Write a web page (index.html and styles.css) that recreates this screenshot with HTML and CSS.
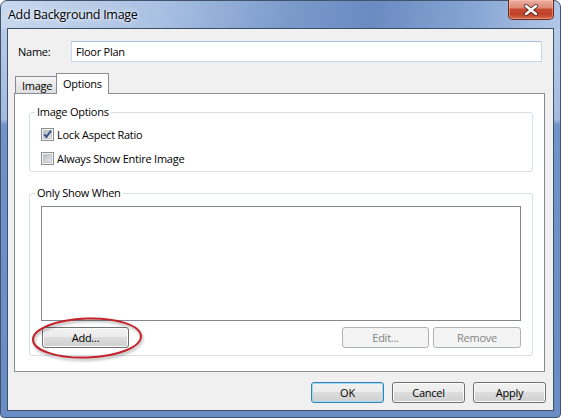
FILE: index.html
```html
<!DOCTYPE html>
<html>
<head>
<meta charset="utf-8">
<link rel="stylesheet" href="styles.css">
</head>
<body>
<div class="window">
  <div class="titlebar">
    <span class="title">Add Background Image</span>
    <div class="close">
      <svg width="16" height="12" viewBox="0 0 16 12">
        <path d="M3 2 L13 10 M13 2 L3 10" stroke="#3a1c18" stroke-width="4.2" stroke-linecap="round" fill="none" opacity="0.75"/>
        <path d="M3 2 L13 10 M13 2 L3 10" stroke="#ffffff" stroke-width="2.4" stroke-linecap="round" fill="none"/>
      </svg>
    </div>
  </div>
  <div class="client">
    <div class="name-row">
      <span class="label">Name:</span>
      <div class="textbox">Floor Plan</div>
    </div>
    <div class="tabs">
      <div class="tab">Image</div>
      <div class="tab active">Options</div>
    </div>
    <div class="panel">
      <div class="group g1">
        <span class="legend">Image Options</span>
        <div class="check">
          <svg class="box" width="13" height="13" viewBox="0 0 13 13">
            <defs><linearGradient id="cb1" x1="0" y1="0" x2="1" y2="1"><stop offset="0" stop-color="#b4b9c0"/><stop offset="1" stop-color="#ececec"/></linearGradient></defs>
            <rect x="0.5" y="0.5" width="12" height="12" fill="#f4f4f4" stroke="#8e8f8f"/>
            <rect x="2.5" y="2.5" width="8" height="8" fill="url(#cb1)" stroke="#c3c6cb"/>
            <path d="M3.2 6.4 L5.4 8.9 L10 2.6" fill="none" stroke="#3d5183" stroke-width="1.9"/>
          </svg>
          <span>Lock Aspect Ratio</span>
        </div>
        <div class="check">
          <svg class="box" width="13" height="13" viewBox="0 0 13 13">
            <defs><linearGradient id="cb2" x1="0" y1="0" x2="1" y2="1"><stop offset="0" stop-color="#b4b9c0"/><stop offset="1" stop-color="#ececec"/></linearGradient></defs>
            <rect x="0.5" y="0.5" width="12" height="12" fill="#f4f4f4" stroke="#8e8f8f"/>
            <rect x="2.5" y="2.5" width="8" height="8" fill="url(#cb2)" stroke="#c3c6cb"/>
          </svg>
          <span>Always Show Entire Image</span>
        </div>
      </div>
      <div class="group g2">
        <span class="legend">Only Show When</span>
        <div class="listbox"></div>
        <div class="btn-row">
          <div class="btn add">Add...</div>
          <div class="btn disabled edit">Edit...</div>
          <div class="btn disabled remove">Remove</div>
        </div>
        <svg class="ellipse" width="118" height="48" viewBox="0 0 118 48">
          <ellipse cx="57" cy="23" rx="54" ry="19.5" fill="none" stroke="#c4222b" stroke-width="2" transform="rotate(-2 57 23)"/>
        </svg>
      </div>
    </div>
    <div class="footer">
      <div class="btn default">OK</div>
      <div class="btn">Cancel</div>
      <div class="btn">Apply</div>
    </div>
  </div>
</div>
</body>
</html>
```
FILE: styles.css
```css
* { box-sizing: border-box; }
html, body { margin: 0; background: #ffffff; }
body {
  font-family: "Segoe UI", "Open Sans", sans-serif;
  font-size: 11px;
  letter-spacing: -0.25px;
  color: #000;
}
.window {
  width: 561px;
  height: 418px;
  border: 1px solid #42546c;
  border-radius: 7px 7px 4px 4px;
  padding: 0 6px 6px;
  display: flex;
  flex-direction: column;
  background:
    linear-gradient(100deg, #c8d8ee 0%, #aac1e3 28%, #7a9acb 52%, #6a8bc1 66%, #86a5d4 84%, #b2c7e6 100%) top left / 100% 28px no-repeat,
    linear-gradient(to bottom, #b8cbe8 28px, #a4bbdf 118px, #7193c8 124px, #6a8cc4 100%);
}
.titlebar {
  height: 27px;
  display: flex;
  justify-content: space-between;
  align-items: flex-start;
}
.title {
  font-size: 12.5px;
  letter-spacing: -0.3px;
  padding: 6px 0 0 1px;
  line-height: 16px;
  text-shadow: 0 0 6px rgba(255,255,255,0.9), 0 0 3px rgba(255,255,255,0.7);
}
.close {
  width: 46px;
  height: 20px;
  margin-top: -1px;
  border: 1px solid #6b2a22;
  border-top: none;
  border-radius: 0 0 5px 5px;
  background: linear-gradient(#eab0a2 0%, #de8a75 40%, #c64a31 50%, #c0412a 75%, #d86a48 100%);
  box-shadow: inset 0 0 0 1px rgba(255,200,180,0.45);
  display: flex;
  align-items: center;
  justify-content: center;
}
.client {
  flex: 1;
  background: #f0f0f0;
  border: 1px solid #3e5069;
  padding-top: 12px;
  display: flex;
  flex-direction: column;
}
.name-row {
  display: flex;
  align-items: center;
  height: 21px;
  padding-left: 10px;
}
.label { width: 53px; }
.textbox {
  width: 471px;
  height: 21px;
  background: #fff;
  border: 1px solid #c5daed;
  border-top-color: #a9c3dc;
  padding-left: 4px;
  line-height: 19px;
}
.tabs {
  margin-top: 11px;
  height: 20px;
  display: flex;
  align-items: flex-end;
  padding-left: 7px;
}
.tab {
  height: 17px;
  border: 1px solid #898c95;
  border-bottom: none;
  background: linear-gradient(#f5f5f5, #e8e8e8 50%, #dedede);
  padding: 1px 0 0 6px;
  width: 42px;
  line-height: 15px;
}
.tab.active {
  height: 21px;
  width: 53px;
  margin-left: -1px;
  margin-bottom: -1px;
  background: #fff;
  position: relative;
  z-index: 1;
  padding: 2px 0 0 6px;
}
.panel {
  margin-left: 6px;
  width: 531px;
  height: 279px;
  border: 1px solid #898c95;
  background: #fff;
  padding: 18px 11px 0 14px;
}
.group {
  position: relative;
  border: 1px solid #d5dfe5;
  border-radius: 3px;
}
.legend {
  position: absolute;
  top: -8px;
  left: 5px;
  padding: 0 2px;
  background: #fff;
  line-height: 14px;
}
.g1 {
  height: 60px;
  padding: 15px 0 0 11px;
  display: flex;
  flex-direction: column;
  gap: 11px;
}
.check {
  display: flex;
  align-items: center;
  height: 13px;
  gap: 3px;
}
.box { display: block; flex: none; }
.g2 {
  margin-top: 21px;
  height: 163px;
  padding: 12px 11px 0 11px;
}
.listbox {
  height: 115px;
  border: 1px solid #828790;
  background: #fff;
}
.btn-row {
  margin-top: 6px;
  display: flex;
  gap: 4px;
}
.btn {
  width: 73px;
  height: 21px;
  border: 1px solid #707070;
  border-radius: 3px;
  background: linear-gradient(#f2f2f2, #ebebeb 50%, #dddddd 50%, #cfcfcf);
  box-shadow: inset 0 0 0 1px #fbfbfb;
  display: flex;
  align-items: center;
  justify-content: center;
  line-height: 15px;
}
.btn.add { width: 87px; margin-left: 1px; margin-right: auto; }
.btn.edit { width: 87px; }
.btn.remove { width: 88px; }
.btn.disabled {
  border-color: #adb2b5;
  background: #f4f4f4;
  box-shadow: none;
  color: #838383;
}
.btn.default {
  border-color: #3c7fb1;
  box-shadow: inset 0 0 0 1px #9ddcf6;
}
.ellipse {
  position: absolute;
  left: 0;
  top: 121px;
  filter: drop-shadow(1px 2px 1.5px rgba(0,0,0,0.35));
}
.footer {
  margin-top: 10px;
  display: flex;
  justify-content: flex-end;
  gap: 8px;
  padding-right: 7px;
}
```
